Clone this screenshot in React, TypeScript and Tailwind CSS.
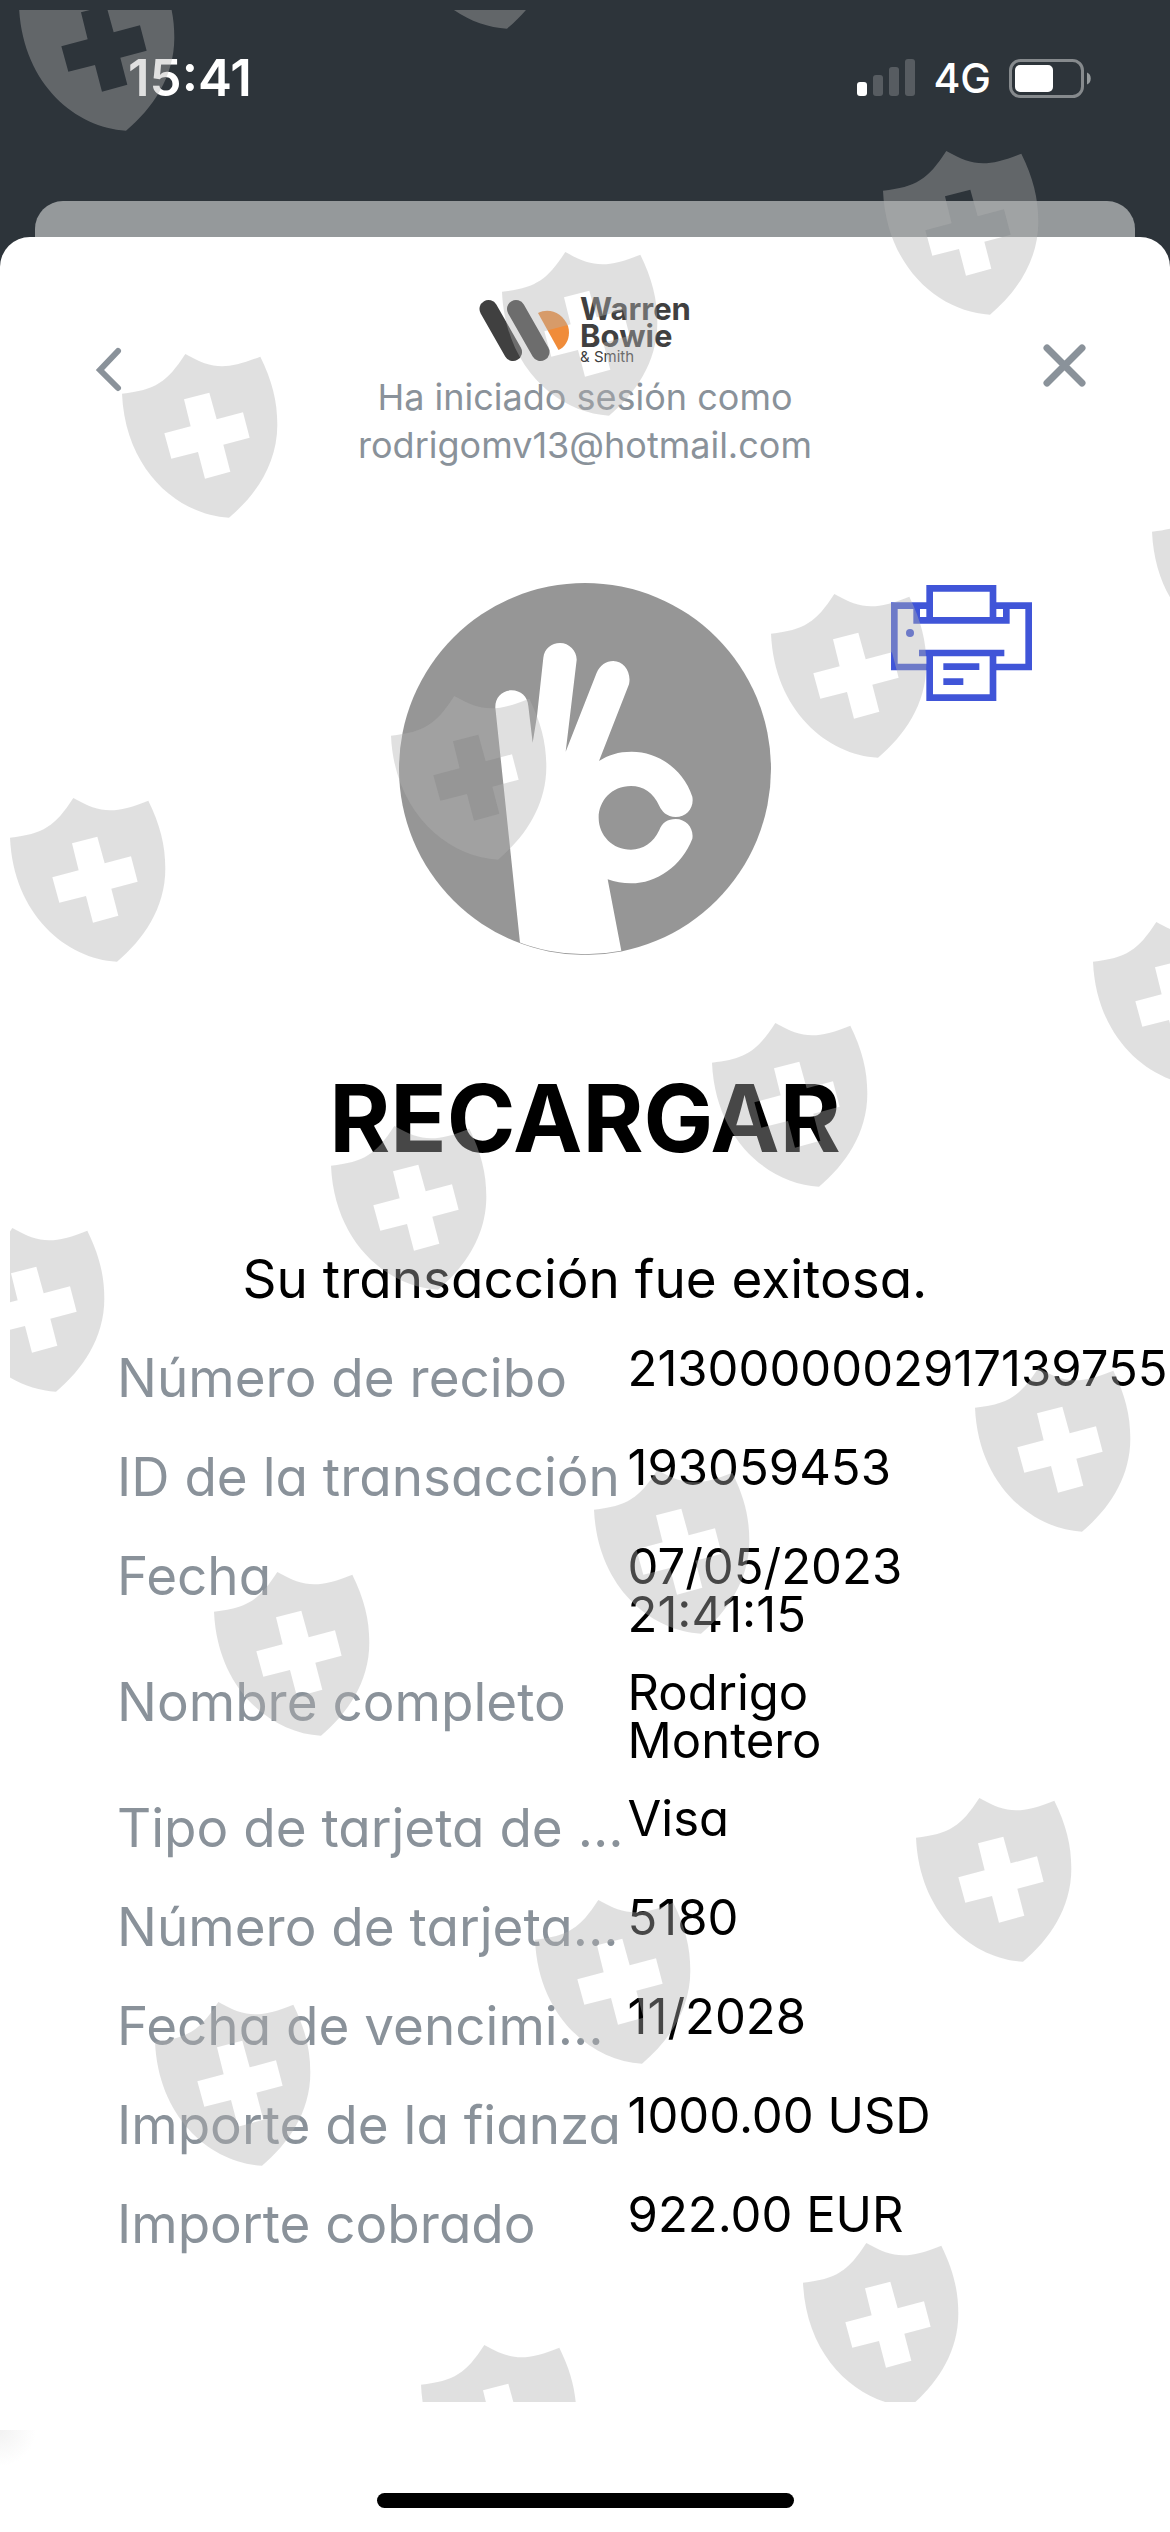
type Detail = {
    label: string;
    value: string;
};

const details: Detail[] = [
    { label: "Número de recibo", value: "2130000002917139755" },
    { label: "ID de la transacción", value: "193059453" },
    { label: "Fecha", value: "07/05/2023 21:41:15" },
    { label: "Nombre completo", value: "Rodrigo Montero" },
    { label: "Tipo de tarjeta de …", value: "Visa" },
    { label: "Número de tarjeta…", value: "5180" },
    { label: "Fecha de vencimi…", value: "11/2028" },
    { label: "Importe de la fianza", value: "1000.00 USD" },
    { label: "Importe cobrado", value: "922.00 EUR" },
];

// Top left corner of every shield in the watermark layer
const shields = [
    [9, -43], [390, -145],
    [112, 344], [492, 242], [873, 141],
    [0, 788], [381, 686], [761, 584], [1142, 482],
    [-61, 1218], [321, 1116], [702, 1013], [1083, 912],
    [204, 1562], [584, 1460], [965, 1358],
    [145, 1992], [525, 1890], [906, 1788],
    [411, 2335], [793, 2233],
];

function Watermark() {
    return (
        <div aria-hidden="true" className="pointer-events-none absolute top-[10px] right-0 bottom-[130px] left-[10px] z-10 overflow-hidden">
            <svg className="h-full w-full">
                <defs>
                    <path
                        id="shield"
                        transform="scale(0.3333)"
                        fillRule="evenodd"
                        d="M0 119C100 108 135 85 190 0C270 45 310 50 415 8C450 80 466 140 466 212C466 330 400 425 321 491C170 483 10 350 0 119ZM186 136L262 116L284 196L363 175L383 251L304 272L325 353L249 374L228 294L148 314L127 238L206 217Z"
                    />
                </defs>
                {shields.map(([x, y]) => (
                    <use key={`${x}-${y}`} href="#shield" x={x} y={y} fill="#b2b2b2" fillOpacity="0.4" />
                ))}
            </svg>
        </div>
    );
}

function StatusBar() {
    return (
        <div className="flex h-[201px] items-start justify-between pt-[48px] pr-[78px] pl-[128px] text-white">
            <span className="text-[51px] leading-[60px] font-semibold">15:41</span>

            <div className="flex h-[60px] items-center gap-[18px]">
                <svg width="58" height="38" viewBox="0 0 58 38" fill="#fff">
                    <rect x="0" y="23" width="10" height="14" rx="3" />
                    <rect x="16" y="16" width="10" height="21" rx="3" opacity="0.2" />
                    <rect x="32" y="8" width="10" height="29" rx="3" opacity="0.2" />
                    <rect x="48" y="0" width="10" height="37" rx="3" opacity="0.2" />
                </svg>
                <span className="text-[41px] leading-[60px] font-medium">4G</span>
                <svg width="83" height="39" viewBox="0 0 83 39" fill="none">
                    <rect x="1.5" y="1.5" width="72" height="36" rx="10" stroke="#868a8d" strokeWidth="3" />
                    <rect x="6" y="6" width="38" height="27" rx="5" fill="#fff" />
                    <path d="M78 13.5C83 15 83 24 78 25.500Z" fill="#959a9c" />
                </svg>
            </div>
        </div>
    );
}

function Logo() {
    return (
        <div className="flex h-[64px] items-start gap-[10px] text-[#404040]">
            <svg width="91" height="64" viewBox="0 0 91 64" fill="none">
                <path d="M9.500 10L34 53" stroke="#404040" strokeWidth="18" strokeLinecap="round" />
                <path d="M37 10L61.500 53" stroke="#404040" strokeWidth="18" strokeLinecap="round" />
                <path d="M59 14C70 8 84 14 89 27C92 37 88 47 79.500 51Z" fill="#f08c3a" />
            </svg>
            <div className="-mt-1">
                <p className="text-[31px] leading-[27px] font-bold">
                    Warren
                    <br />
                    Bowie
                </p>
                <p className="text-[15px] leading-[15px]">&amp; Smith</p>
            </div>
        </div>
    );
}

function OkHand() {
    return (
        <svg className="size-[372px]" viewBox="87 71 1116 1116" role="img" aria-label="OK">
            <clipPath id="disc">
                <circle cx="645" cy="629" r="556" />
            </clipPath>
            <circle cx="645" cy="629" r="558" fill="#969696" />
            <path
                clipPath="url(#disc)"
                fill="#fff"
                d="M450 1150L376 445C375 415 395 393 425 393C452 393 473 412 475 440L488 550L501 470L520 295C523 268 545 251 570 251C598 251 621 275 620 302L587 577L680 340C690 318 708 305 730 305C762 305 785 340 777 375L687 605C715 587 745 577 785 577C865 577 940 630 967 712C973 745 950 773 917 773C890 773 875 755 868 740C850 700 820 680 783 680C725 680 686 725 686 775C686 828 728 871 783 871C820 871 850 850 868 812C876 790 893 779 917 779C950 779 972 808 967 838C935 920 860 972 783 972C758 972 735 968 713 960L757 1190L455 1190Z"
            />
        </svg>
    );
}

function Printer() {
    return (
        <svg width="141" height="116" viewBox="0 0 423 348" fill="none" stroke="#4055d8" strokeWidth="20">
            <path d="M116 62H10V246H116M306 62H413V246H306" />
            <path d="M116 106V10H306V106" />
            <path d="M77 62V106H346V62" />
            <path d="M84 204H340M116 204V338H306V204" />
            <path d="M157 245H265M157 290H217" />
            <circle cx="57" cy="144" r="12" fill="#4055d8" stroke="none" />
        </svg>
    );
}

export default function App() {
    return (
        <div className="relative flex min-h-screen flex-col overflow-hidden bg-[#2d343a] font-['Inter','Liberation_Sans',sans-serif]">
            <StatusBar />

            {/* Card behind the sheet */}
            <div className="mx-[35px] h-[36px] rounded-t-[28px] bg-[#95999b]" />

            <main className="flex flex-1 flex-col rounded-t-[30px] bg-white">
                {/* Header */}
                <header className="flex items-start justify-between px-[84px] pt-[62px] text-[#8a929a]">
                    <button type="button" aria-label="Atrás" className="mt-[46px]">
                        <svg width="50" height="50" viewBox="0 0 50 50" fill="none" stroke="currentColor" strokeWidth="6" strokeLinecap="round">
                            <path d="M34 6L16 25L34 43" />
                        </svg>
                    </button>
                    <div className="flex flex-col items-center">
                        <Logo />
                        <p className="mt-[10px] text-center text-[36px] leading-[48px]">
                            Ha iniciado sesión como
                            <br />
                            rodrigomv13@hotmail.com
                        </p>
                    </div>
                    <button type="button" aria-label="Cerrar" className="mt-[42px]">
                        <svg width="50" height="50" viewBox="0 0 50 50" fill="none" stroke="currentColor" strokeWidth="7" strokeLinecap="round">
                            <path d="M11 7L46 42M46 7L11 42" />
                        </svg>
                    </button>
                </header>

                <div className="mt-[114px] grid grid-cols-[1fr_auto_1fr] items-start">
                    <div className="col-start-2">
                        <OkHand />
                    </div>
                    <button type="button" aria-label="Imprimir" className="mt-[2px] ml-[120px] justify-self-start">
                        <Printer />
                    </button>
                </div>

                <div className="[font-feature-settings:'cv11']">
                    <h1 className="mt-[108px] text-center text-[93px] leading-[110px] font-bold">RECARGAR</h1>
                    <p className="mt-[76px] text-center text-[53px] leading-[60px]">Su transacción fue exitosa.</p>

                    {/* Receipt details */}
                    <dl className="mt-[36px] px-[10%]">
                        {details.map((item) => (
                            <div key={item.label} className="grid min-h-[99px] grid-cols-[minmax(0,6fr)_minmax(0,5fr)] pb-[30px]">
                                <dt className="text-[53px] leading-[66px] whitespace-nowrap text-[#8a929a]">{item.label}</dt>
                                <dd className="pr-20 text-[49px] leading-[48px] text-black">{item.value}</dd>
                            </div>
                        ))}
                    </dl>
                </div>

                <div className="mt-auto h-[102px] bg-[radial-gradient(circle_at_top_left,#f2f2f2,#fff_36px)] pt-[63px]">
                    <div className="mx-auto h-[15px] w-[417px] rounded-full bg-black" />
                </div>
            </main>

            <Watermark />
        </div>
    );
}
